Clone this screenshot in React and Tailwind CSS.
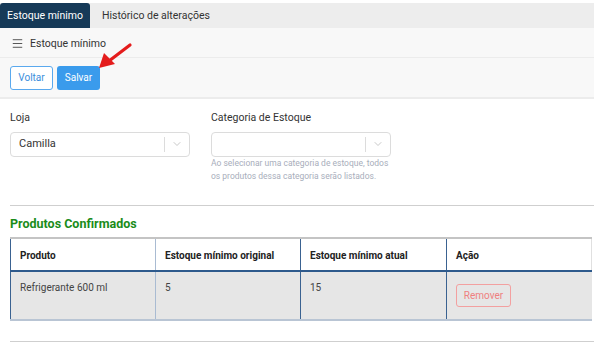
import { Menu, ChevronDown } from "lucide-react";

function Select({ value }) {
  return (
    <div className="flex h-[25px] w-[180px] items-center rounded border border-[#dcdcdc] bg-white">
      <span className="flex-1 pl-2 text-[11px] text-[#333]">{value}</span>
      <span className="h-[15px] w-px bg-[#dcdcdc]" />
      <span className="flex w-[24px] justify-center text-[#b5b5b5]">
        <ChevronDown className="h-3 w-3" strokeWidth={1.5} />
      </span>
    </div>
  );
}

export default function App() {
  return (
    <div
      className="relative h-[342px] w-[594px] overflow-hidden bg-white"
      style={{ fontFamily: "Roboto, 'Liberation Sans', sans-serif" }}
    >
      <div className="mt-[3px] flex h-[25px] bg-[#ededed]">
        <div className="flex w-[90px] items-center justify-center rounded-t-[3px] bg-[#163a58] text-[10.5px] text-white">
          Estoque mínimo
        </div>
        <div className="flex items-center px-[12px] text-[10.5px] text-[#333]">
          Histórico de alterações
        </div>
      </div>

      <div className="flex h-[30px] items-center gap-[6px] border-b border-[#ececec] bg-[#f8f8f8] px-[11px] pt-[2px] text-[10.5px] text-[#333]">
        <Menu className="h-[13px] w-[13px]" strokeWidth={1.5} />
        Estoque mínimo
      </div>

      <div className="flex h-[41px] items-center gap-[4px] border-b-2 border-[#ececec] bg-[#f8f8f8] px-[10px]">
        <button className="h-[24px] w-[43px] rounded-[3px] border border-[#5aa9ee] bg-white text-[10px] text-[#3b8fdc]">
          Voltar
        </button>
        <button className="h-[24px] w-[43px] rounded-[3px] bg-[#3a9bec] text-[10px] text-white">
          Salvar
        </button>
      </div>

      <svg className="absolute left-[96px] top-[40px]" width="40" height="32" viewBox="0 0 40 32">
        <line x1="34" y1="5" x2="13" y2="21" stroke="#e41c1c" strokeWidth="3.2" strokeLinecap="round" />
        <polygon points="3,28 8,13 19,24" fill="#e41c1c" />
      </svg>

      <div className="flex gap-[21px] px-[10px] pt-[11px]">
        <div className="flex flex-col">
          <label className="mb-[6px] text-[10.5px] text-[#333]">Loja</label>
          <Select value="Camilla" />
        </div>
        <div className="flex flex-col">
          <label className="mb-[6px] text-[10.5px] text-[#333]">Categoria de Estoque</label>
          <Select value="" />
          <p className="mt-0 w-[200px] text-[8.5px] leading-[13px] text-[#a8aebb]">
            Ao selecionar uma categoria de estoque, todos
            <br />
            os produtos dessa categoria serão listados.
          </p>
        </div>
      </div>

      <div className="ml-[10px] mt-[22px] border-t border-[#cfcfcf]" />

      <h2 className="ml-[10px] mt-[9px] text-[12.5px] font-bold text-[#1a8c1a]">Produtos Confirmados</h2>

      <div className="ml-[10px] mt-[3px] w-[582px] border-t-2 border-[#c4c4c4]">
        <div className="grid grid-cols-[145px_145px_146px_146px] border-b-2 border-[#2e5a8c] bg-white text-[10px] font-bold text-[#222]">
          <div className="h-[31px] border-l border-[#3a6291] px-[9px] pt-[9px]">Produto</div>
          <div className="border-l border-[#a9bbd2] px-[9px] pt-[9px]">Estoque mínimo original</div>
          <div className="border-l border-[#3a6291] px-[9px] pt-[9px]">Estoque mínimo atual</div>
          <div className="border-l border-[#3a6291] border-r border-r-[#e0e0e0] px-[9px] pt-[9px]">Ação</div>
        </div>
        <div className="grid grid-cols-[145px_145px_146px_146px] border-b-2 border-[#b9c5d4] bg-[#e6e6e6] text-[10px] text-[#444]">
          <div className="h-[47px] border-l border-[#3a6291] px-[9px] pt-[8px]">Refrigerante 600 ml</div>
          <div className="border-l border-[#a9bbd2] px-[9px] pt-[8px]">5</div>
          <div className="border-l border-[#3a6291] px-[9px] pt-[8px]">15</div>
          <div className="border-l border-[#3a6291] px-[9px] pt-[12px]">
            <button className="h-[23px] w-[55px] rounded-[3px] border border-[#f3a0a0] text-[10px] text-[#ef7f7f]">
              Remover
            </button>
          </div>
        </div>
      </div>

      <div className="ml-[10px] mt-[20px] border-t border-[#cfcfcf]" />
    </div>
  );
}
